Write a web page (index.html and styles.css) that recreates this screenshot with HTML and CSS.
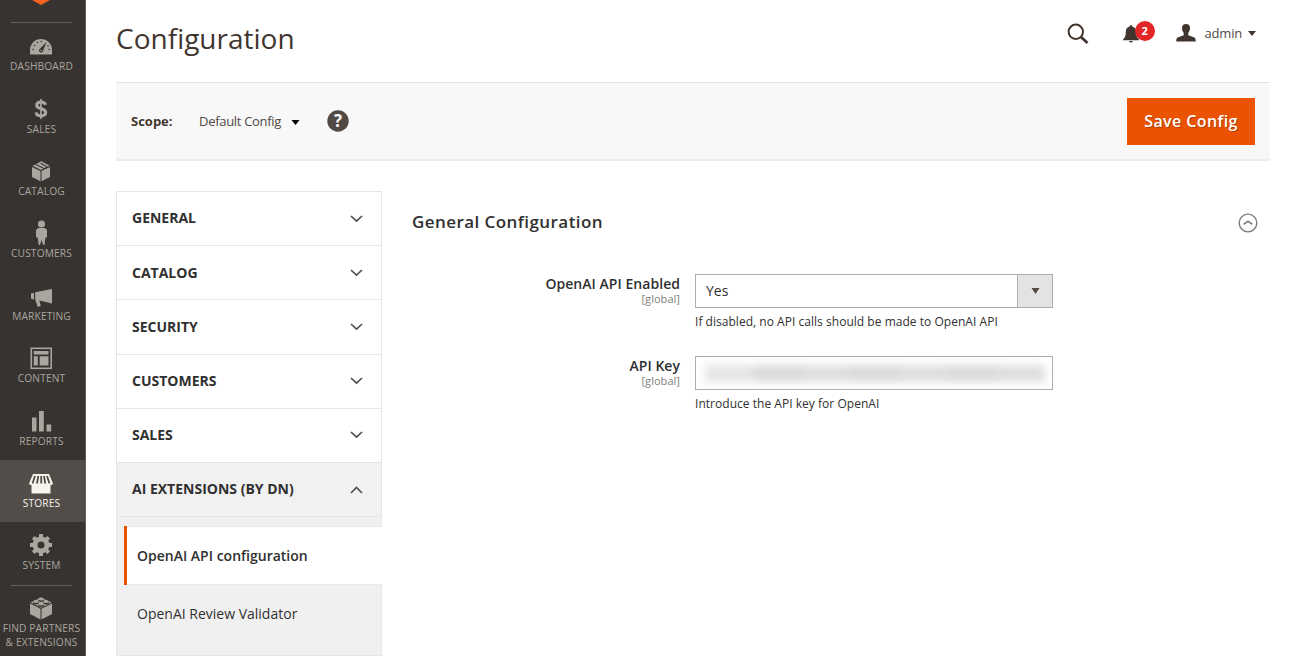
FILE: index.html
```html
<!DOCTYPE html>
<html lang="en">
<head>
<meta charset="utf-8">
<title>Configuration</title>
<link rel="stylesheet" href="styles.css">
</head>
<body>
<div class="app">
  <nav class="menu">
    <div class="logo"><svg width="26" height="6" viewBox="0 0 26 6"><path d="M4 -5 13 -10 22 -5V0L13 5 4 0Z" fill="#f26322"/></svg></div>
    <a class="item"><span class="icon"><svg width="24" height="24" viewBox="0 0 24 24"><path fill="currentColor" d="M1 19.500V15a11 11 0 0 1 22 0v4.500Z"/><g fill="#373330"><circle cx="4" cy="14.500" r=".8"/><circle cx="5.500" cy="10.500" r=".8"/><circle cx="8.500" cy="7.500" r=".8"/><circle cx="12.300" cy="6.500" r=".8"/><circle cx="19" cy="11" r=".8"/><circle cx="20.200" cy="14.500" r=".8"/><path d="M17.500 7 14 15.800A2 2 0 1 1 10.700 14Z"/></g><circle cx="12.100" cy="15.500" r=".8" fill="currentColor"/></svg></span><span class="label">DASHBOARD</span></a>
    <a class="item"><span class="icon"><svg class="raised" width="24" height="24" viewBox="0 0 24 24"><path fill="none" stroke="currentColor" stroke-width="3.100" d="M16.500 7.800C16 5.800 14.400 5 12 5 9.400 5 7.700 6.200 7.700 8.300 7.700 13 16.700 10.300 16.700 15.300 16.700 17.700 14.800 18.900 12 18.900 9 18.900 7.400 17.700 7.100 15.400"/><path d="M12 2V22" stroke="currentColor" stroke-width="1.700"/></svg></span><span class="label">SALES</span></a>
    <a class="item"><span class="icon"><svg class="raised-far" width="24" height="24" viewBox="0 0 24 24"><path fill="currentColor" d="M3 8 11.500 12V22.300L3 18ZM21 8 12.500 12V22.300L21 18ZM3.500 6.800 6 5.600 14.200 9.800 12 11ZM7.200 5 12.200 2.200 14 3 9 6ZM7.200 5 9.500 3.700 17 7.800 15.500 9.300ZM10.800 3 12.500 2.200 20.700 6.800 18.500 7.800Z"/></svg></span><span class="label">CATALOG</span></a>
    <a class="item"><span class="icon"><svg class="raised-far" width="24" height="26" viewBox="0 0 24 26"><circle cx="12.500" cy="4" r="3.600" fill="currentColor"/><path fill="currentColor" d="M9.500 8H15.500Q18 8.500 18 11V17L16.300 18 15.500 25H14.300L12.500 20 11 25H9.700L8.800 18 7 17V11Q7 8.500 9.500 8Z"/></svg></span><span class="label">CUSTOMERS</span></a>
    <a class="item"><span class="icon"><svg class="raised-far" width="24" height="24" viewBox="0 0 24 24"><path fill="currentColor" d="M2 9.500 5 8.800V15.500L2 14.800ZM6.200 8.300 23 5V19.500L10.300 16.600 11.800 22 8.800 23 6.200 15.700Z"/></svg></span><span class="label">MARKETING</span></a>
    <a class="item"><span class="icon"><svg class="raised-far" width="24" height="24" viewBox="0 0 24 24"><rect x="2.300" y="2.300" width="19.900" height="20" fill="none" stroke="currentColor" stroke-width="1.600"/><path fill="currentColor" d="M4.800 5H19.500V8.600H4.800ZM4.800 10.300H8.800V19.600H4.800ZM10.700 10.300H19.500V19.600H10.700Z"/></svg></span><span class="label">CONTENT</span></a>
    <a class="item"><span class="icon"><svg class="raised-far" width="24" height="24" viewBox="0 0 24 24"><path fill="currentColor" d="M3 8.500H7.500V22.500H3ZM10 2H14.800V22.500H10ZM17.500 15.500H22.200V22.500H17.500Z"/></svg></span><span class="label">REPORTS</span></a>
    <a class="item active"><span class="icon"><svg width="26" height="24" viewBox="0 0 26 24"><path fill="currentColor" d="M5 2H21L25 11.500Q24 13.500 22.500 13V21.500H3.500V13Q2 13.500 1 11.500Z"/><path d="M7 4 4.500 11.500M10.300 4 9 11.500M13.200 4V11.500M16 4 17.200 11.500M19 4 21.500 11.500" stroke="#524d49" stroke-width="1.800"/></svg></span><span class="label">STORES</span></a>
    <a class="item"><span class="icon"><svg class="raised-far" width="24" height="24" viewBox="0 0 24 24"><circle cx="12" cy="12" r="6" fill="none" stroke="currentColor" stroke-width="5"/><g stroke="currentColor" stroke-width="4"><path d="M12 1V5M12 19V23M1 12H5M19 12H23M4.300 4.300 7 7M17 17 19.700 19.700M4.300 19.700 7 17M17 7 19.700 4.300"/></g></svg></span><span class="label">SYSTEM</span></a>
    <a class="item partners"><span class="icon"><svg class="raised-far" width="24" height="24" viewBox="0 0 24 24"><path fill="currentColor" d="M1 7.500 11.500 12.700V23.500L1 18ZM23 7.500 12.500 12.700V23.500L23 18ZM1.500 6.500 12 1.500 22.500 6.500 12 11.700Z"/><g fill="#373330"><ellipse cx="12" cy="4.200" rx="3" ry="1.700"/><ellipse cx="7" cy="6.800" rx="3" ry="1.700"/><ellipse cx="17" cy="6.800" rx="3" ry="1.700"/><ellipse cx="12" cy="9.300" rx="3" ry="1.700"/></g><g fill="currentColor"><ellipse cx="12" cy="3" rx="2.800" ry="1.500"/><ellipse cx="7" cy="5.600" rx="2.800" ry="1.500"/><ellipse cx="17" cy="5.600" rx="2.800" ry="1.500"/><ellipse cx="12" cy="8.100" rx="2.800" ry="1.500"/></g></svg></span><span class="label">FIND PARTNERS<br>&amp; EXTENSIONS</span></a>
  </nav>
  <main class="page">
    <header class="header">
      <h1>Configuration</h1>
      <div class="tools">
        <svg class="search" width="22" height="22" viewBox="0 0 22 22"><circle cx="8.800" cy="8.800" r="7.200" fill="none" stroke="#41362f" stroke-width="2"/><path d="M14 14 20.500 20" stroke="#41362f" stroke-width="2.800"/></svg>
        <div class="bell"><svg width="16" height="18" viewBox="0 0 16 18"><path fill="#41362f" d="M8 0C9 0 9.200 1 9.200 1.500 12 2 13.200 4 13.200 7 13.200 11 14 12.500 16 14.500V15.200H0V14.500C2 12.500 2.800 11 2.800 7 2.800 4 4 2 6.800 1.500 6.800 1 7 0 8 0ZM6 16H10Q9.500 17.500 8 17.500T6 16Z"/></svg><span class="badge">2</span></div>
        <svg class="user" width="20" height="18" viewBox="0 0 20 18"><path fill="#41362f" d="M10 0C13 0 14 1.800 14 4 14 7 12.700 8 12.300 9V11.300L18.500 13.600Q19.800 14.200 19.800 17.500H.2Q.2 14.200 1.500 13.600L7.700 11.300V9C7.300 8 6 7 6 4 6 1.800 7 0 10 0Z"/></svg>
        <span class="admin">admin</span>
        <svg width="8" height="5" viewBox="0 0 8 5"><path d="M0 0H8L4 5Z" fill="#41362f"/></svg>
      </div>
    </header>
    <section class="scope">
      <strong>Scope:</strong><span class="store">Default Config</span>
      <svg class="caret" width="9" height="5" viewBox="0 0 9 5"><path d="M.5 0H8.500L4.500 5Z"/></svg>
      <span class="help"><svg width="22" height="22" viewBox="0 0 22 22"><circle cx="11" cy="11" r="10.700" fill="#514943"/></svg><b>?</b></span>
      <button class="save">Save Config</button>
    </section>
    <div class="content">
      <aside class="tabs">
        <div class="tab"><span>GENERAL</span><svg width="13" height="8" viewBox="0 0 13 8"><path d="M1 1 6.500 6.200 12 1"/></svg></div>
        <div class="tab"><span>CATALOG</span><svg width="13" height="8" viewBox="0 0 13 8"><path d="M1 1 6.500 6.200 12 1"/></svg></div>
        <div class="tab"><span>SECURITY</span><svg width="13" height="8" viewBox="0 0 13 8"><path d="M1 1 6.500 6.200 12 1"/></svg></div>
        <div class="tab"><span>CUSTOMERS</span><svg width="13" height="8" viewBox="0 0 13 8"><path d="M1 1 6.500 6.200 12 1"/></svg></div>
        <div class="tab"><span>SALES</span><svg width="13" height="8" viewBox="0 0 13 8"><path d="M1 1 6.500 6.200 12 1"/></svg></div>
        <div class="tab open"><span>AI EXTENSIONS (BY DN)</span><svg width="13" height="8" viewBox="0 0 13 8"><path d="M1 7 6.500 1.500 12 7"/></svg></div>
        <div class="subs">
          <div class="sub current">OpenAI API configuration</div>
          <div class="sub">OpenAI Review Validator</div>
        </div>
      </aside>
      <section class="config">
        <div class="title"><h2>General Configuration</h2><svg width="20" height="20" viewBox="0 0 20 20" fill="none" stroke="#777"><circle cx="10" cy="10" r="8.800" stroke-width="1.300"/><path d="M5.700 11.400 10 8.200 14.300 11.400" stroke-width="1.600"/></svg></div>
        <div class="field">
          <div class="name"><span>OpenAI API Enabled</span><small>[global]</small></div>
          <div class="control">
            <div class="select"><span>Yes</span><i><svg width="9" height="6" viewBox="0 0 9 6"><path d="M.5 0H8.500L4.500 6Z" fill="#514943"/></svg></i></div>
            <p class="note">If disabled, no API calls should be made to OpenAI API</p>
          </div>
        </div>
        <div class="field">
          <div class="name"><span>API Key</span><small>[global]</small></div>
          <div class="control">
            <div class="input"><div class="masked"><i></i><i></i><i></i><i></i><i></i><i></i><i></i></div></div>
            <p class="note">Introduce the API key for OpenAI</p>
          </div>
        </div>
      </section>
    </div>
  </main>
</div>
</body>
</html>
```
FILE: styles.css
```css
* { box-sizing: border-box; }
body { margin: 0; background: #fff; font-family: "Open Sans", "Noto Sans", sans-serif; color: #41362f; font-size: 14px; }
h1, h2, p { margin: 0; }
svg { display: block; flex: none; }
.app { display: flex; height: 656px; overflow: hidden; }
.menu { width: 86px; flex: none; background: #373330; border-right: 1px solid #625e5b; color: #aaa59e; }
.logo { height: 23px; margin: 0 13px 0 11px; padding-left: 17px; border-bottom: 1px solid #625e59; }
.item { display: flex; flex-direction: column; align-items: center; height: 62.400px; padding: 12.300px 2px 0 0; }
.icon { display: flex; justify-content: center; align-items: center; height: 24px; margin-right: 1px; }
.raised { margin-top: -1px; }
.raised-far { margin-top: -2px; }
.label { font-size: 10.200px; line-height: 14px; letter-spacing: .15px; text-align: center; white-space: nowrap; }
.active { background: #524d49; color: #f7f3eb; width: 85px; }
.partners { position: relative; height: 72px; padding-top: 12px; }
.partners::before { content: ""; position: absolute; left: 11px; top: 0; width: 61px; height: 1px; background: #625e59; }
.page { flex: 1; padding: 0 34px 0 30px; }
.header { display: flex; justify-content: space-between; height: 82px; }
h1 { font-size: 28px; font-weight: 400; line-height: 38px; padding-top: 19px; }
.tools { display: flex; align-items: center; height: 67px; padding-right: 14px; }
.search { margin-right: 34px; }
.bell { position: relative; margin: 1px 0 0; }
.badge { position: absolute; left: 12px; top: -4px; width: 20px; height: 20px; border-radius: 10px; background: #e22626; color: #fff; font-size: 11px; font-weight: 700; line-height: 20px; text-align: center; }
.user { margin: -2px 9px 0 37px; }
.admin { font-size: 13px; letter-spacing: -.200px; margin: -1px 6px 0 0; color: #514943; }
.scope { display: flex; align-items: center; height: 79px; border-top: 1px solid #e3e3e3; border-bottom: 2px solid #ededed; background: #f8f8f8; padding: 0 15px; font-size: 13px; }
.scope strong { width: 68px; font-weight: 700; }
.store { width: 92px; letter-spacing: -.300px; color: #514943; }
.caret { margin-top: 3px; }
.help { position: relative; margin: -1px 0 0 27px; color: #f8f8f8; }
.help b { position: absolute; inset: 0; font-size: 17px; line-height: 22px; text-align: center; }
.save { margin-left: auto; width: 128px; height: 47px; padding: 0; border: 0; background: #eb5202; color: #fff; font: 600 16px/46px "Open Sans", sans-serif; letter-spacing: .4px; text-shadow: 1px 1px 0 rgba(0,0,0,.25); }
.content { display: flex; padding-top: 30px; }
.tabs { width: 266px; height: 465px; border: 1px solid #e6e6e6; flex: none; color: #303030; }
.tab { display: flex; align-items: center; justify-content: space-between; height: 54.200px; padding: 0 18px 0 15px; border-bottom: 1px solid #e6e6e6; font-weight: 700; }
.tab span { margin-top: -1.500px; }
.tab svg { fill: none; stroke: #505050; stroke-width: 1.700; }
.open { background: #f1f1f1; }
.subs { background: #f0f0f0; height: 137.800px; padding: 9px 0 0 7px; }
.sub { height: 59px; line-height: 58px; padding-left: 13px; }
.current { width: 258px; border-left: 3px solid #eb5202; background: #fff; padding-left: 10px; font-weight: 600; line-height: 59px; box-shadow: inset 0 1px #e8e8e8, inset 0 -1px #e8e8e8; }
.config { flex: 1; padding-left: 30px; color: #303030; }
.title { display: flex; align-items: center; justify-content: space-between; height: 62px; padding-right: 12px; margin-bottom: 21px; }
.title svg { margin-top: 2px; }
h2 { font-size: 17px; font-weight: 600; letter-spacing: .43px; margin-top: -1px; }
.field { display: flex; height: 82px; }
.name { width: 268px; margin-right: 15px; text-align: right; font-weight: 600; line-height: 20px; letter-spacing: .04px; }
.name span, .name small { display: block; }
.name small { font-size: 11px; font-weight: 400; line-height: 12px; margin-top: -1px; color: #808080; }
.control { width: 358px; }
.select, .input { display: flex; height: 34px; border: 1px solid #adadad; justify-content: space-between; line-height: 32px; padding-left: 10px; background: #fff; }
.select i { display: flex; justify-content: center; align-items: center; width: 35px; border-left: 1px solid #adadad; background: #e3e3e3; }
.input { align-items: center; padding: 0 7px 0 9px; overflow: hidden; }
.masked { display: flex; height: 17px; flex: 1; filter: blur(4px); }
.masked i { flex: 1; background: #dedede; }
.masked i:nth-child(even) { background: #dadada; }
.masked i:first-child { background: #e5e5e5; }
.note { padding-top: 5px; font-size: 12px; line-height: 17px; letter-spacing: .03px; }
```
